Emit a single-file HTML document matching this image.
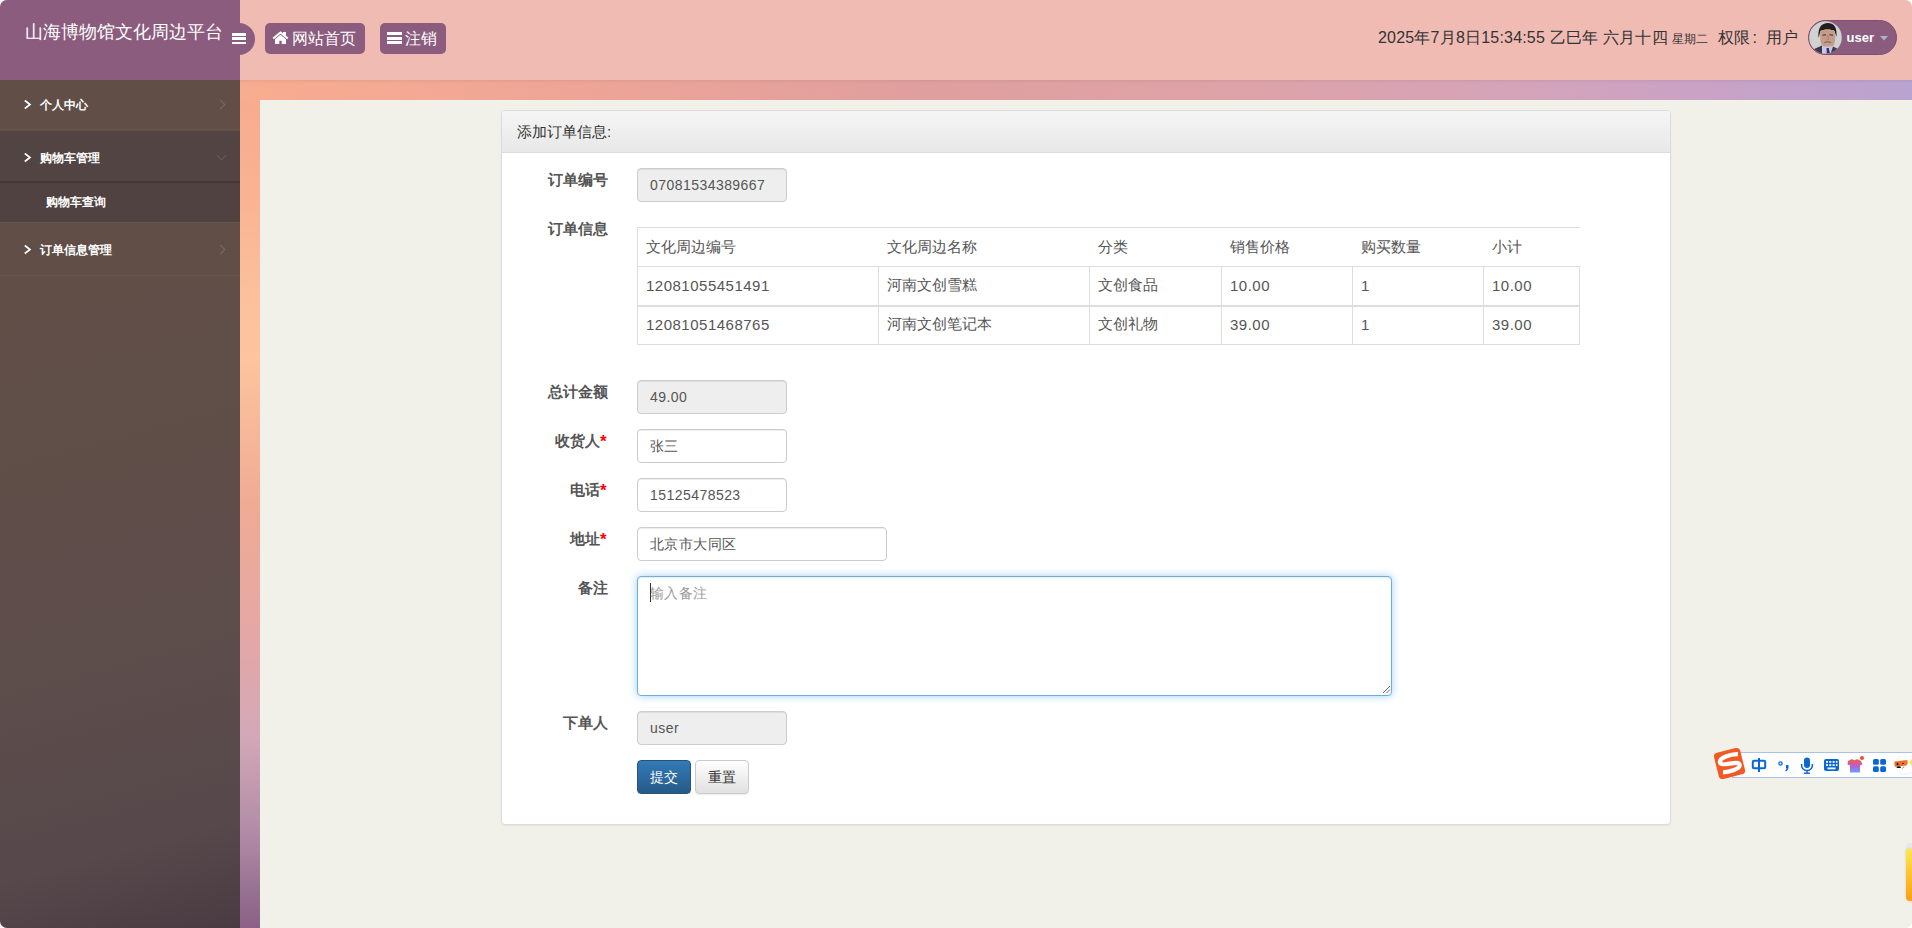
<!DOCTYPE html>
<html><head><meta charset="utf-8">
<style>
*{box-sizing:border-box;margin:0;padding:0}
html,body{width:1912px;height:928px;overflow:hidden}
html{background:#fff}
body{font-family:"Liberation Sans",sans-serif;font-size:14px;color:#333;background:#f1f0e9;position:relative;border-radius:7px}
.abs{position:absolute}
#bg{left:240px;top:80px;width:20px;height:848px;background:linear-gradient(180deg,#f7ab8f 2%,#f9b393 14%,#fcc19c 26%,#fdc49e 33%,#f0ab94 50%,#e4a7a6 66%,#d4a8b8 77%,#b48ea8 88%,#967090 96%,#8c6088 100%)}
#bg2{left:240px;top:80px;width:1672px;height:20px;background:linear-gradient(90deg,#f8ad90 0%,#eea597 20%,#e09f9e 40%,#dea3a8 60%,#d6a4b8 75%,#c9a2c6 88%,#b9a3d0 100%)}
#content{left:260px;top:100px;width:1652px;height:828px;background:#f1f0e9}
#header{left:0;top:0;width:1912px;height:80px;background:#f0bbb3;box-shadow:0 1px 3px rgba(0,0,0,.08)}
#logo{left:0;top:0;width:240px;height:80px;background:#8b5c7e}
#logo .t{position:absolute;left:25px;top:20px;font-size:18px;color:#fff;white-space:nowrap;letter-spacing:0}
#toggle{left:223px;top:23px;width:32px;height:32px;border-radius:50%;background:#8b5c7e}
.hb{position:absolute;width:14px;height:2.8px;background:#fff}
.hbtn{position:absolute;top:23px;height:31px;background:#8b5c7e;border-radius:5px;color:#fff;font-size:16px;line-height:31px;white-space:nowrap}
#sidebar{left:0;top:80px;width:240px;height:848px;background:linear-gradient(165deg,#614e47 0%,#604e48 40%,#5c4c4b 70%,#56484b 88%,#4a3b42 100%)}
.mi{position:absolute;left:0;width:240px;color:#fff;font-size:12px;font-weight:bold;white-space:nowrap}
.panel{left:501px;top:110px;width:1170px;height:715px;background:#fff;border:1px solid #ddd;border-radius:4px;box-shadow:0 1px 2px rgba(0,0,0,.05)}
.ph{position:absolute;left:0;top:0;width:100%;height:42px;background:linear-gradient(#f5f5f5,#e8e8e8);border-bottom:1px solid #ddd;border-radius:3px 3px 0 0}
.lbl{position:absolute;width:120px;text-align:right;font-weight:bold;font-size:15px;color:#555;white-space:nowrap}
.lbl i{font-style:normal;color:red;position:relative;top:.5px;margin-right:1.5px;margin-left:-.5px;font-size:17px;line-height:0}
.fc{position:absolute;height:34px;border:1px solid #ccc;border-radius:4px;background:#fff;font-size:14px;color:#555;padding:0 12px;line-height:33px;letter-spacing:.45px;box-shadow:inset 0 1px 1px rgba(0,0,0,.075);white-space:nowrap}
.ro{background:#eee}
table{border-collapse:collapse;position:absolute;left:637px;top:227px;width:943px;font-size:15px;color:#555}
.dg{letter-spacing:.5px}
td,th{font-weight:normal;text-align:left;padding:0 8px;height:39px;border-top:1px solid #ddd}
td{border:1px solid #ddd}
.r2 td{border-top:2px solid #ddd;padding-bottom:2px}
.chev{position:absolute;left:23px;top:2px;width:10px;height:11px}
.rchev{position:absolute;left:217px;top:4px;width:7px;height:7px;border-right:1px solid #7b6a64;border-top:1px solid #7b6a64;transform:rotate(45deg)}
.dchev{position:absolute;left:218px;top:2px;width:7px;height:7px;border-right:1px solid #6a5a58;border-bottom:1px solid #6a5a58;transform:rotate(45deg)}
</style></head>
<body>
<div id="bg" class="abs"></div><div id="bg2" class="abs"></div>
<div id="content" class="abs"></div>

<div id="header" class="abs">
  <div id="logo" class="abs"><div class="t">山海博物馆文化周边平台</div></div>
  <div id="toggle" class="abs">
    <div class="hb" style="left:9px;top:10px"></div>
    <div class="hb" style="left:9px;top:14px"></div>
    <div class="hb" style="left:9px;top:18.5px"></div>
  </div>
  <div class="hbtn" style="left:265px;width:100px;padding-left:27px">网站首页</div>
  <div class="hbtn" style="left:380px;width:66px;padding-left:25px">注销</div>
  <svg class="abs" style="left:272px;top:31px" width="17" height="14" viewBox="0 0 17 14"><polyline points="1.2,7.6 8.5,1.6 15.8,7.6" fill="none" stroke="#fff" stroke-width="2" stroke-linejoin="miter"/><rect x="11" y="1" width="3" height="4" fill="#fff"/><path d="M3,8.2 L8.5,3.8 L14,8.2 L14,13 L9.7,13 L9.7,9.8 L7.3,9.8 L7.3,13 L3,13 Z" fill="#fff"/></svg>
  <div class="hb" style="left:387px;top:32px;width:15px"></div><div class="hb" style="left:387px;top:36.8px;width:15px"></div><div class="hb" style="left:387px;top:41.4px;width:15px"></div>
  <div class="abs" style="left:1378px;top:28px;font-size:16px;color:#333;white-space:nowrap;letter-spacing:.2px">2025年7月8日15:34:55 乙巳年 六月十四 <span style="font-size:12px;letter-spacing:0">星期二</span></div>
  <div class="abs" style="left:1718px;top:28px;font-size:16px;color:#333;white-space:nowrap">权限<span style="margin-left:2.5px;margin-right:9px">:</span>用户</div>
  <div class="abs" style="left:1808px;top:20px;width:89px;height:35px;border-radius:18px;background:#8b5c7e;border:1px solid #7d4f72"></div>
  <svg class="abs" style="left:1808.5px;top:21px" width="33" height="33" viewBox="0 0 33 33">
    <defs><clipPath id="avc"><circle cx="16.5" cy="16.5" r="16.3"/></clipPath></defs>
    <g clip-path="url(#avc)">
      <rect width="33" height="33" fill="#cfd2d0"/>
      <path d="M9.5,17 C9,9 10.5,2.5 18.5,2 C26,2 28,7 27.5,16 L25.5,10 C22,8 15,8 11.5,10 Z" fill="#221e1e"/>
      <path d="M11.5,10 C15,8 22,8 25.5,10 C26.5,14 26.5,20 25,23.5 C23,27 14.5,27.5 12.5,23.5 C11,20 10.8,14 11.5,10 Z" fill="#c69c88"/>
      <path d="M13.5,14.2 L17,13.8 M20.5,13.8 L24,14.2" stroke="#3a2a26" stroke-width="1"/>
      <path d="M18.5,14 L19.5,18.5 L17.8,19" stroke="#a27664" stroke-width=".8" fill="none"/>
      <path d="M15,21 C17,20 20.5,20 22.5,21 L22,22 C20,21.3 17.2,21.3 15.5,22 Z" fill="#7d7069"/>
      <path d="M1,33 L4,28.5 L13,24.5 L17.5,33 Z" fill="#353a44"/>
      <path d="M13,24.5 L15,26 L17.5,33 L13,33 Z" fill="#cdc5ee"/>
      <path d="M15,25.5 L24,25.5 L21.5,33 L17.5,33 Z" fill="#cdc5ee"/>
      <path d="M17.5,27 L19.8,27 L21,33 L17.8,33 Z" fill="#3a3462"/>
      <path d="M24,25.5 L21.5,33 L33,33 L31,29 Z" fill="#3b404a"/>
    </g>
  </svg>
  <div class="abs" style="left:1846.5px;top:29.5px;font-size:13px;font-weight:bold;color:#fff">user</div>
  <svg class="abs" style="left:1880px;top:35.5px" width="8" height="5" viewBox="0 0 8 5"><path d="M0,0 L8,0 L4,4.5 Z" fill="#aab3c8"/></svg>
</div>

<div id="sidebar" class="abs">
  <div class="abs" style="left:0;top:0;width:240px;height:50px;border-bottom:1px solid #67544d"></div>
  <div class="abs" style="left:0;top:51px;width:240px;height:50px;background:#514442"></div>
  <div class="abs" style="left:0;top:101px;width:240px;height:41px;background:#4f4240;border-top:2px solid #453937"></div>
  <div class="abs" style="left:0;top:142px;width:240px;height:54px;border-top:1px solid #67544d;border-bottom:1px solid #67544d"></div>
  <div class="mi" style="top:17px"><svg class="chev" viewBox="0 0 10 11"><polyline points="1.8,1.5 7,5.5 1.8,9.5" fill="none" stroke="#fff" stroke-width="1.7"/></svg><span style="position:absolute;left:40px">个人中心</span><span class="rchev"></span></div>
  <div class="mi" style="top:70px"><svg class="chev" viewBox="0 0 10 11"><polyline points="1.8,1.5 7,5.5 1.8,9.5" fill="none" stroke="#fff" stroke-width="1.7"/></svg><span style="position:absolute;left:40px">购物车管理</span><span class="dchev"></span></div>
  <div class="mi" style="top:114px"><span style="position:absolute;left:46px">购物车查询</span></div>
  <div class="mi" style="top:162px"><svg class="chev" viewBox="0 0 10 11"><polyline points="1.8,1.5 7,5.5 1.8,9.5" fill="none" stroke="#fff" stroke-width="1.7"/></svg><span style="position:absolute;left:40px">订单信息管理</span><span class="rchev"></span></div>
</div>

<div class="panel abs">
  <div class="ph"><div class="abs" style="left:15px;top:12px;font-size:15px;color:#333">添加订单信息:</div></div>
</div>
<div class="lbl" style="left:488px;top:171px">订单编号</div>
<div class="fc ro" style="left:637px;top:168px;width:150px">07081534389667</div>
<div class="lbl" style="left:488px;top:220px">订单信息</div>
<table>
<tr><th style="border-left:1px solid #ddd;width:241px">文化周边编号</th><th style="width:211px">文化周边名称</th><th style="width:132px">分类</th><th style="width:131px">销售价格</th><th style="width:131px">购买数量</th><th>小计</th></tr>
<tr class="r1"><td class="dg">12081055451491</td><td>河南文创雪糕</td><td>文创食品</td><td class="dg">10.00</td><td class="dg">1</td><td class="dg">10.00</td></tr>
<tr class="r2"><td class="dg">12081051468765</td><td>河南文创笔记本</td><td>文创礼物</td><td class="dg">39.00</td><td class="dg">1</td><td class="dg">39.00</td></tr>
</table>
<div class="lbl" style="left:488px;top:383px">总计金额</div>
<div class="fc ro" style="left:637px;top:380px;width:150px">49.00</div>
<div class="lbl" style="left:488px;top:432px">收货人<i>*</i></div>
<div class="fc" style="left:637px;top:429px;width:150px">张三</div>
<div class="lbl" style="left:488px;top:481px">电话<i>*</i></div>
<div class="fc" style="left:637px;top:478px;width:150px">15125478523</div>
<div class="lbl" style="left:488px;top:530px">地址<i>*</i></div>
<div class="fc" style="left:637px;top:527px;width:250px">北京市大同区</div>
<div class="lbl" style="left:488px;top:579px">备注</div>
<div class="fc" style="left:637px;top:576px;width:755px;height:120px;border-color:#66afe9;box-shadow:inset 0 1px 1px rgba(0,0,0,.075),0 0 8px rgba(102,175,233,.6);color:#999;line-height:20px;padding-top:6px">输入备注</div>
<div class="lbl" style="left:488px;top:714px">下单人</div>
<div class="fc ro" style="left:637px;top:711px;width:150px">user</div>
<div class="abs" style="left:637px;top:760px;width:54px;height:34px;border:1px solid #245580;border-radius:4px;background:linear-gradient(#337ab7,#265a88);color:#fff;text-align:center;line-height:32px">提交</div>
<div class="abs" style="left:695px;top:760px;width:54px;height:34px;border:1px solid #ccc;border-radius:4px;background:linear-gradient(#fff,#e0e0e0);color:#333;text-align:center;line-height:32px;box-shadow:inset 0 1px 0 rgba(255,255,255,.15),0 1px 1px rgba(0,0,0,.075)">重置</div>


<div class="abs" style="left:650px;top:583px;width:1px;height:19px;background:#333"></div>
<svg class="abs" style="left:1381px;top:684px" width="10" height="10" viewBox="0 0 10 10"><path d="M2,9 L9,2 M5.5,9 L9,5.5" stroke="#666" stroke-width="1"/></svg>
<!-- IME toolbar -->
<div class="abs" style="left:1732px;top:752px;width:182px;height:26px;background:#fff;border:1px solid #a9c3e6;border-right:none"></div>
<svg class="abs" style="left:1712px;top:746px" width="36" height="35" viewBox="0 0 36 35">
  <rect x="4" y="4" width="27" height="27" rx="4" fill="#f15a24" transform="rotate(-14 17.5 17.5)"/>
  <path d="M28,10.5 C21,8.5 8.5,9.5 8.5,14.5 C8.5,19 27,16 27,21 C27,25.5 15,26 9,24.5" stroke="#fff" stroke-width="4.3" fill="none" transform="rotate(-14 17.5 17.5)"/>
</svg>
<svg class="abs" style="left:1750px;top:756px" width="162" height="20" viewBox="0 0 162 20">
  <g fill="#0b66d6">
    <rect x="2.8" y="4.8" width="12.4" height="7.4" rx="1.2" fill="none" stroke="#0b66d6" stroke-width="2"/>
    <rect x="8" y="2" width="2" height="14"/>
    <circle cx="30.5" cy="7.5" r="1.6" fill="none" stroke="#0b66d6" stroke-width="1.3"/>
    <path d="M36,9 L38.5,9 L38.5,11 C38.5,13.5 37.5,14.5 35.8,15.5 L35.2,14.5 C36.3,13.8 36.5,13 36.4,12 L36,12 Z"/>
    <rect x="54" y="1.5" width="6" height="10.5" rx="3"/>
    <path d="M51.5,8 C51.5,12.5 53.5,14.5 57,14.5 C60.5,14.5 62.5,12.5 62.5,8" fill="none" stroke="#0b66d6" stroke-width="1.5"/>
    <rect x="56.3" y="14.5" width="1.4" height="2.5"/><rect x="54" y="16.5" width="6" height="1.4"/>
    <rect x="74" y="3" width="15" height="12" rx="2"/>
    <g fill="#fff"><rect x="76" y="5" width="2" height="1.8"/><rect x="79.3" y="5" width="2" height="1.8"/><rect x="82.6" y="5" width="2" height="1.8"/><rect x="85.9" y="5" width="1.6" height="1.8"/>
    <rect x="76" y="8.2" width="2" height="1.8"/><rect x="79.3" y="8.2" width="2" height="1.8"/><rect x="82.6" y="8.2" width="2" height="1.8"/><rect x="85.9" y="8.2" width="1.6" height="1.8"/>
    <rect x="77.5" y="11.5" width="8" height="1.8"/></g>
  </g>
  <defs><linearGradient id="shg" x1="0" y1="0" x2="0" y2="1"><stop offset="0" stop-color="#f0603a"/><stop offset=".6" stop-color="#b062e0"/><stop offset="1" stop-color="#5aa8ff"/></linearGradient></defs>
  <path d="M98,5 L102,3 C103,4.5 106,4.5 107,3 L111,5 L112.5,8.5 L110,9.5 L110,16.5 L100,16.5 L100,9.5 L97.5,8.5 Z" fill="url(#shg)"/>
  <circle cx="112" cy="2" r="2" fill="#f04a3a"/>
  <g fill="#0b66d6"><rect x="123" y="3" width="5.8" height="5.8" rx="1.5"/><rect x="130.2" y="3" width="5.8" height="5.8" rx="1.5"/><rect x="123" y="10.2" width="5.8" height="5.8" rx="1.5"/><rect x="130.2" y="10.2" width="5.8" height="5.8" rx="1.5"/></g>
  <circle cx="155.5" cy="8.5" r="10" fill="#fff" stroke="#f2e6ec" stroke-width=".7"/>
  <path d="M144.5,5.5 L157,4 Q158,4.5 157.5,8 L156.5,9.5 L145,10.8 Q144,8 144.5,5.5 Z" fill="#ee7228"/>
  <ellipse cx="147.5" cy="8" rx=".9" ry="1.3" fill="#111"/>
  <ellipse cx="153" cy="7.3" rx="1" ry=".6" fill="#222"/>
  <ellipse cx="148.8" cy="11.2" rx="2.3" ry=".9" fill="#111"/>
  <path d="M152.5,12.5 L154,10.5" stroke="#555" stroke-width=".7"/>
  <path d="M159.5,6.5 L162,3 L162,10 Z" fill="#ffe23a"/>
</svg>
<div class="abs" style="left:1906px;top:843px;width:8px;height:8px;background:#e8e8e8;border-radius:4px 0 0 0"></div>
<div class="abs" style="left:1906px;top:849px;width:8px;height:52px;background:linear-gradient(#ffe94c,#ff9d12);border-radius:0 0 0 4px;box-shadow:0 0 3px rgba(0,0,0,.12)"></div>
</body></html>
